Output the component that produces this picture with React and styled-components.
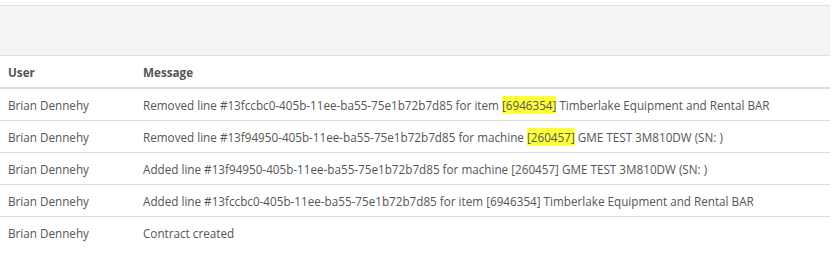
import React from "react";
import styled, { createGlobalStyle } from "styled-components";

const GlobalStyle = createGlobalStyle`
  body {
    margin: 0;
    background: #fff;
    font-family: "Open Sans", "Liberation Sans", sans-serif;
    font-size: 11.7px;
    color: #555;
  }
`;

const rows = [
  {
    user: "Brian Dennehy",
    before: "Removed line #13fccbc0-405b-11ee-ba55-75e1b72b7d85 for item ",
    mark: "[6946354]",
    after: " Timberlake Equipment and Rental BAR",
  },
  {
    user: "Brian Dennehy",
    before: "Removed line #13f94950-405b-11ee-ba55-75e1b72b7d85 for machine ",
    mark: "[260457]",
    after: " GME TEST 3M810DW (SN: )",
  },
  {
    user: "Brian Dennehy",
    before:
      "Added line #13f94950-405b-11ee-ba55-75e1b72b7d85 for machine [260457] GME TEST 3M810DW (SN: )",
  },
  {
    user: "Brian Dennehy",
    before:
      "Added line #13fccbc0-405b-11ee-ba55-75e1b72b7d85 for item [6946354] Timberlake Equipment and Rental BAR",
  },
  { user: "Brian Dennehy", before: "Contract created" },
];

const App = () => {
  return (
    <Page>
      <GlobalStyle />
      <Toolbar />
      <HeaderRow>
        <HeadCell>User</HeadCell>
        <HeadCell>Message</HeadCell>
      </HeaderRow>
      {rows.map((row, i) => (
        <Row key={i} $last={i === rows.length - 1}>
          <Cell>{row.user}</Cell>
          <Cell>
            {row.before}
            {row.mark && <Highlight>{row.mark}</Highlight>}
            {row.after}
          </Cell>
        </Row>
      ))}
    </Page>
  );
};

export default App;

const Page = styled.div`
  width: 830px;
  padding-top: 5px;
`;

const Toolbar = styled.div`
  height: 49px;
  background: #f4f4f4;
  border-top: 1px solid #e0e0e0;
  border-bottom: 1px solid #e0e0e0;
`;

const HeaderRow = styled.div`
  display: grid;
  grid-template-columns: 135px 1fr;
  align-items: center;
  height: 31px;
  border-bottom: 2px solid #dedede;
`;

const HeadCell = styled.div`
  padding-left: 8px;
  font-weight: 700;
  color: #555;
`;

const Row = styled.div`
  display: grid;
  grid-template-columns: 135px 1fr;
  align-items: center;
  height: 31px;
  border-bottom: ${(p) => (p.$last ? "none" : "1px solid #dedede")};
`;

const Cell = styled.div`
  padding-left: 8px;
  white-space: nowrap;
  color: #555;
`;

const Highlight = styled.span`
  background: #ffff3a;
  padding: 1px 0;
`;
